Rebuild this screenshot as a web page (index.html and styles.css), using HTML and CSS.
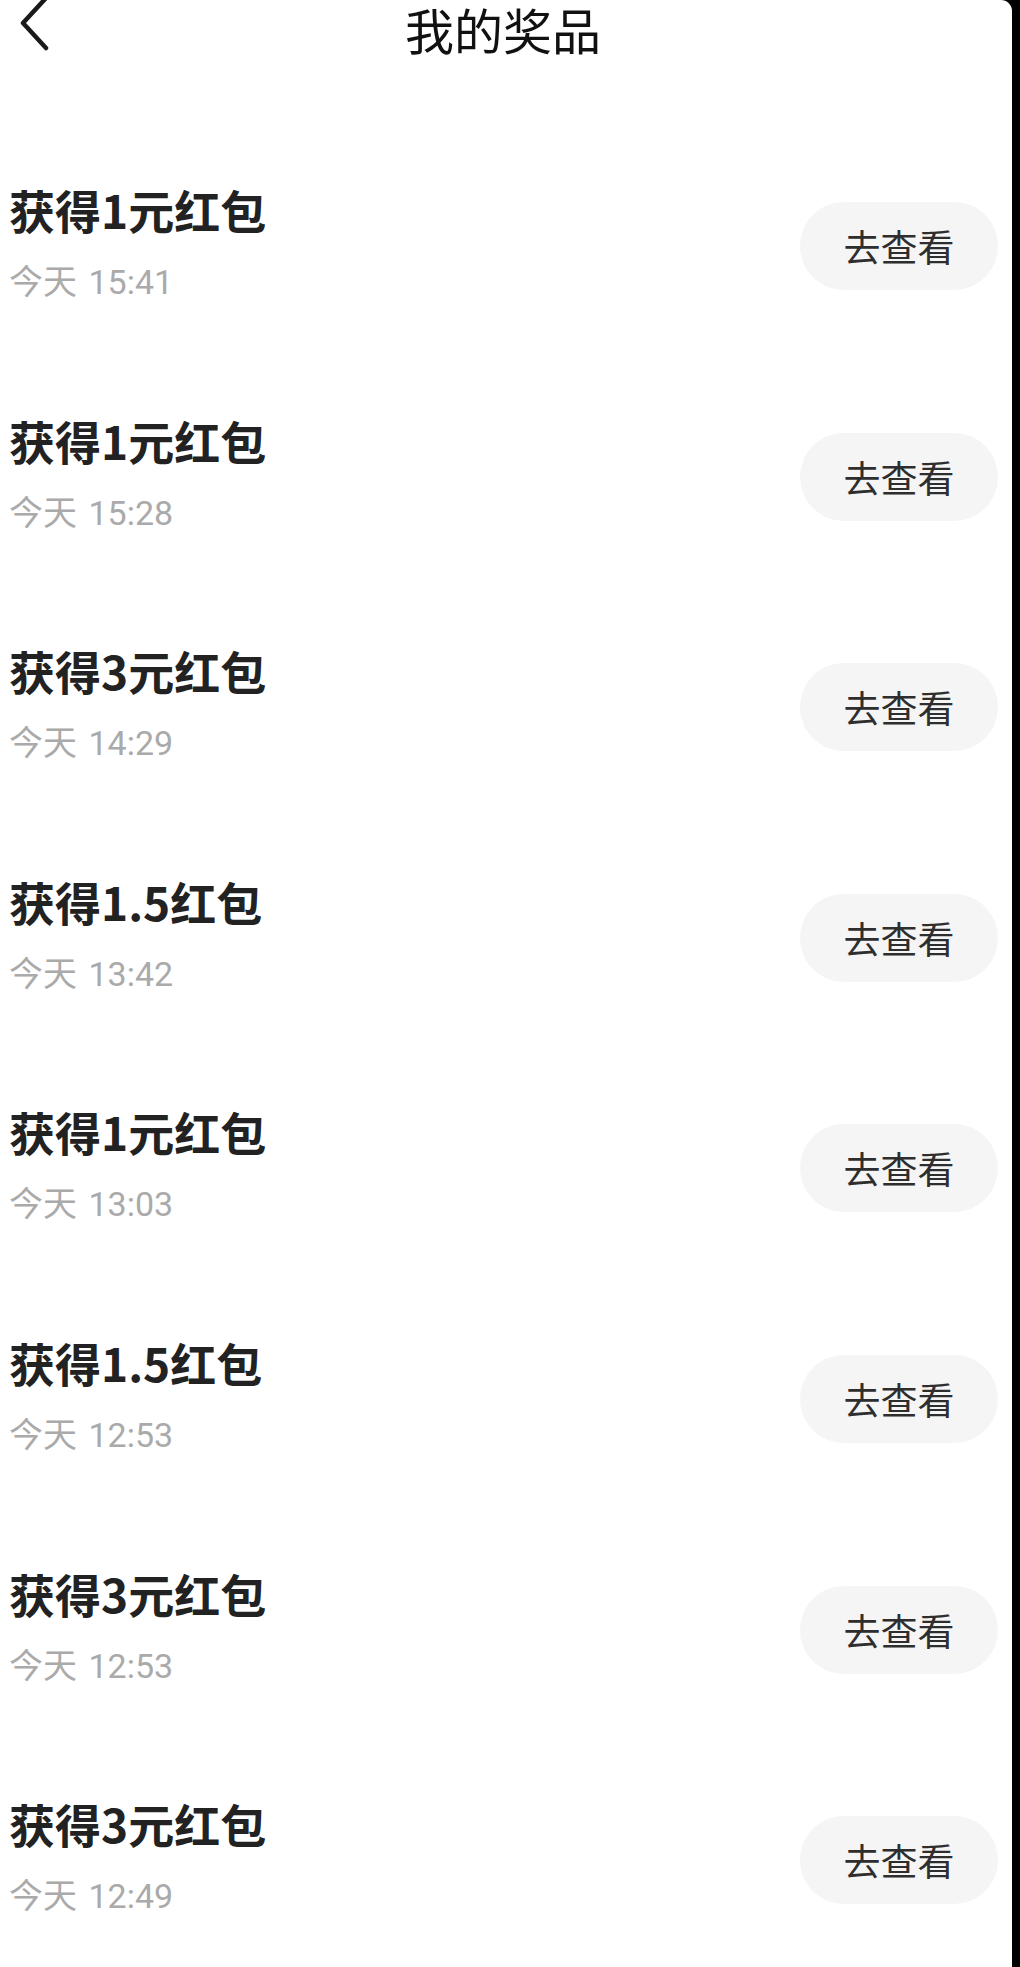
FILE: index.html
```html
<!DOCTYPE html>
<html lang="zh-CN">
<head>
<meta charset="utf-8">
<title>我的奖品</title>
<link rel="stylesheet" href="styles.css">
</head>
<body>
<div class="screen">
  <header class="nav">
    <div class="nav-left">
      <svg class="back" width="30" height="52" viewBox="0 0 30 52">
        <polyline points="26,-2 3,23 26,48" fill="none" stroke="#1a1a1a" stroke-width="4.5" stroke-linecap="round" stroke-linejoin="round"/>
      </svg>
    </div>
    <h1 class="nav-title">我的奖品</h1>
    <div class="nav-right"></div>
  </header>
  <ul class="list">
    <li class="row"><div class="info"><div class="name">获得1元红包</div><div class="time">今天 15:41</div></div><button class="btn">去查看</button></li>
    <li class="row"><div class="info"><div class="name">获得1元红包</div><div class="time">今天 15:28</div></div><button class="btn">去查看</button></li>
    <li class="row"><div class="info"><div class="name">获得3元红包</div><div class="time">今天 14:29</div></div><button class="btn">去查看</button></li>
    <li class="row"><div class="info"><div class="name">获得1.5红包</div><div class="time">今天 13:42</div></div><button class="btn">去查看</button></li>
    <li class="row"><div class="info"><div class="name">获得1元红包</div><div class="time">今天 13:03</div></div><button class="btn">去查看</button></li>
    <li class="row"><div class="info"><div class="name">获得1.5红包</div><div class="time">今天 12:53</div></div><button class="btn">去查看</button></li>
    <li class="row"><div class="info"><div class="name">获得3元红包</div><div class="time">今天 12:53</div></div><button class="btn">去查看</button></li>
    <li class="row"><div class="info"><div class="name">获得3元红包</div><div class="time">今天 12:49</div></div><button class="btn">去查看</button></li>
  </ul>
</div>
</body>
</html>
```
FILE: styles.css
```css
html, body {
  margin: 0;
  padding: 0;
  background: #000;
  height: 1967px;
  overflow: hidden;
}
body {
  font-family: "Noto Sans CJK SC", "Noto Sans", sans-serif;
}
.screen {
  width: 1012px;
  height: 1967px;
  background: #fff;
  border-top-right-radius: 11px;
  overflow: hidden;
}
.nav {
  display: grid;
  grid-template-columns: 1fr auto 1fr;
  align-items: start;
  height: 130.7px;
}
.nav-left {
  padding-left: 20px;
}
.back {
  display: block;
}
.nav-title {
  margin: 2px 0 0;
  font-size: 49px;
  font-weight: 400;
  line-height: 54px;
  color: #111;
  transform: translateX(-3px);
}
.list {
  list-style: none;
  margin: 0;
  padding: 0;
}
.row {
  height: 230.6px;
  display: flex;
  align-items: center;
  justify-content: space-between;
  padding-left: 9px;
  padding-right: 14px;
}
.info {
  display: flex;
  flex-direction: column;
  padding-bottom: 6px;
}
.name {
  font-size: 46px;
  font-weight: 700;
  line-height: 50px;
  color: #222;
}
.time {
  margin-top: 28px;
  font-family: "Roboto", "Noto Sans CJK SC", sans-serif;
  font-size: 34px;
  word-spacing: 3px;
  line-height: 40px;
  color: #aaa;
}
.btn {
  width: 198px;
  height: 88px;
  border: none;
  border-radius: 44px;
  background: #f5f5f5;
  color: #2e2e2e;
  font-family: "Noto Sans CJK SC", "Noto Sans", sans-serif;
  font-size: 37px;
  padding: 0;
}
```
